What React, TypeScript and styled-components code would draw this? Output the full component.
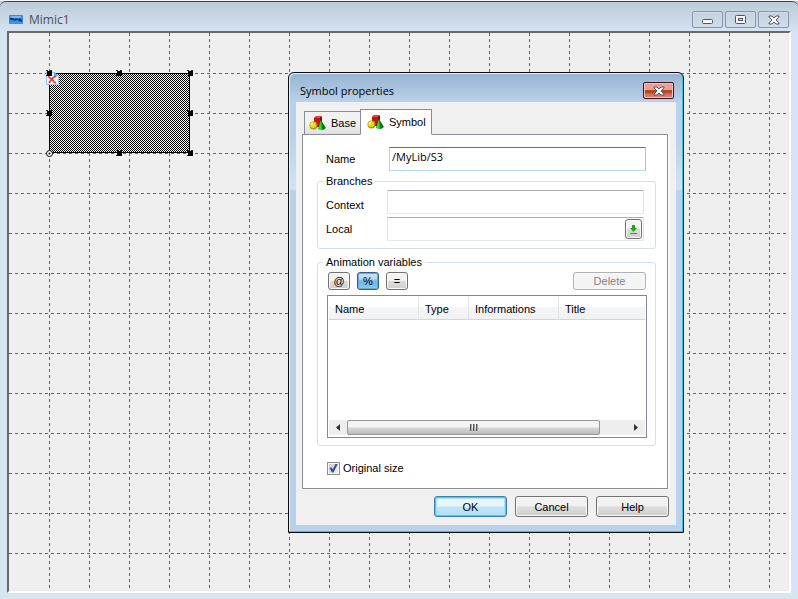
import React from "react";
import styled, { createGlobalStyle, css } from "styled-components";

const GlobalStyle = createGlobalStyle`
  *, *::before, *::after { box-sizing: border-box; }
  body { margin: 0; background: #fff; font: 11px/14px "Liberation Sans", Arial, sans-serif; color: #000; }
  button, input { font: inherit; color: inherit; margin: 0; }
`;

const uiFont = css`font-family: "Open Sans", "Segoe UI", sans-serif; line-height: 16px;`;

const MainWindow = styled.main`
  position: relative;
  display: flex;
  flex-direction: column;
  min-height: 100vh;
  padding: 0 7px 6px;
  border-top: 1px solid #f4f4f4;
  background: linear-gradient(#bccad9, #d7e4f2 32px);
  &::before {
    content: "";
    position: absolute;
    inset: 0;
    border: solid #3f4448;
    border-width: 1px 0 0;
    border-radius: 6px 6px 0 0;
    pointer-events: none;
  }
`;

const MainTitleBar = styled.header`
  display: flex;
  align-items: center;
  gap: 6px;
  height: 30px;
  padding: 7px 0 0 2px;
`;

const MainTitle = styled.h1`
  ${uiFont}
  flex: 1;
  margin: 0;
  font-size: 12px;
  font-weight: 400;
  color: #4a4f56;
`;

const WindowButtons = styled.div`
  display: flex;
  gap: 2px;
  padding-right: 2px;
`;

const WindowButton = styled.button`
  display: flex;
  align-items: center;
  justify-content: center;
  width: 31px;
  height: 17px;
  padding: 0;
  border: 1px solid #8393ae;
  border-radius: 2px;
  background: linear-gradient(#c4d2e0, #cfdcea);
  box-shadow: inset 0 0 0 1px #d3deea;
`;

const CloseButton = styled(WindowButton)`
  border-color: #43111f;
  background: linear-gradient(#e5a196 0 45%, #b8491f 50% 66%, #d0705e 72%, #dc8577);
  box-shadow: inset 0 0 0 1px #f0c4b8;
`;

const Canvas = styled.section`
  flex: 1;
  display: flex;
  border: 2px solid;
  border-color: #696969 #fff #fff #696969;
  background: #efefef;
  box-shadow: inset -1px -1px 0 #e8e8e8;
  svg { flex: 1; display: block; }
`;

const Dialog = styled.section`
  position: absolute;
  left: 288px;
  top: 71px;
  width: 396px;
  padding: 0 7px 7px;
  border: 1px solid #0a0c0e;
  border-radius: 6px 6px 0 0;
  background: linear-gradient(#98b4d2, #b9d1ea 29px, #b9d1ea 64px, #d3e2f3 116px, #b9d1ea 118px);
  box-shadow: inset -1px -1px 0 #35c5e8, inset 1px 1px 0 #e3eef9;
`;

const DialogTitleBar = styled.header`
  display: flex;
  align-items: center;
  justify-content: space-between;
  height: 29px;
  padding: 6px 2px 0 4px;
`;

const DialogTitle = styled.h2`
  ${uiFont}
  margin: 0;
  font-size: 11px;
  font-weight: 400;
`;

const DialogBody = styled.div`
  padding: 7px 7px 8px 6px;
  background: #f0f0f0;
`;

const TabList = styled.div`
  display: flex;
  align-items: flex-end;
  height: 26px;
  padding-left: 2px;
  margin-bottom: -1px;
`;

const Tab = styled.button<{ $active?: boolean }>`
  position: relative;
  display: flex;
  align-items: center;
  gap: 5px;
  width: ${(p) => (p.$active ? 72 : 57)}px;
  height: ${(p) => (p.$active ? 26 : 24)}px;
  margin-left: ${(p) => (p.$active ? -1 : 0)}px;
  padding: 0 0 0 ${(p) => (p.$active ? 6 : 4)}px;
  border: 1px solid #898c95;
  border-bottom-color: ${(p) => (p.$active ? "#fff" : "#898c95")};
  background: ${(p) => (p.$active ? "#fff" : "linear-gradient(#f2f2f2 50%, #dfdfdf)")};
`;

const Panel = styled.form`
  display: flex;
  flex-direction: column;
  margin-right: 1px;
  padding: 12px 11px 13px 14px;
  border: 1px solid #898c95;
  background: #fff;
  box-shadow: 2px 1px 0 #fafafa;
`;

const Field = styled.div<{ $wide?: boolean }>`
  display: grid;
  grid-template-columns: ${(p) => (p.$wide ? 63 : 61)}px 1fr;
  align-items: center;
  padding: ${(p) => (p.$wide ? "0 10px 0 9px" : "0 3px 0 0")};
  & + & { margin-top: 3px; }
`;

const LowLabel = styled.label`
  padding-top: 5px;
`;

const TextInput = styled.input`
  ${uiFont}
  width: 100%;
  min-width: 0;
  height: 24px;
  padding: 0 2px 5px;
  border: 1px solid;
  border-color: #3d7bad #a4c9e3 #b7d9ed #b5cfe7;
  border-radius: 1px;
  background: #fff;
  font-size: 11px;
  outline: 0;
`;

const QuietInput = styled(TextInput)`
  border-color: #abadb3 #e2e3ea #e3e9ef #e2e3ea;
`;

const ComboBox = styled.div`
  display: flex;
  align-items: center;
  height: 24px;
  padding-right: 1px;
  border: 1px solid;
  border-color: #abadb3 #e2e3ea #e3e9ef #e2e3ea;
  border-radius: 1px;
  input { flex: 1; height: 20px; border: 0; }
`;

const Group = styled.fieldset`
  min-width: 0;
  margin: 0;
  padding: 2px 8px 7px;
  border: 1px solid #d5dfe5;
  border-radius: 3px;
`;

const Branches = styled(Group)`
  margin-top: 3px;
`;

const Animation = styled(Group)`
  margin-top: 6px;
`;

const Legend = styled.legend`
  height: 14px;
  margin-left: -3px;
  padding: 0 3px;
`;

const Button = styled.button<{ $primary?: boolean; $pressed?: boolean }>`
  display: flex;
  align-items: center;
  justify-content: center;
  height: 18px;
  padding: 0;
  border: 1px solid ${(p) => (p.$primary ? "#3c7fb1" : p.$pressed ? "#2c628b" : "#707070")};
  border-radius: 3px;
  background: ${(p) =>
    p.$primary
      ? "linear-gradient(#e9f5fc 48%, #bfe4f7 52%, #b8dff4)"
      : p.$pressed
        ? "linear-gradient(#c3def1 30%, #6eb4e4 55%, #8bcdf4)"
        : "linear-gradient(#f2f2f2 46%, #dddddd 52%, #cfcfcf)"};
  box-shadow: ${(p) =>
    p.$primary
      ? "inset 0 0 0 1px #43cdf5, inset 0 0 0 2px #a5e4f9"
      : p.$pressed
        ? "inset 0 0 0 1px #70a9cf"
        : "inset 0 0 0 1px #fafafa"};
  &:disabled {
    border-color: #adb2b5;
    background: #f4f4f4;
    color: #838383;
  }
`;

const SquareButton = styled(Button)`
  width: 22px;
`;

const PickButton = styled(Button)`
  width: 17px;
  height: 20px;
`;

const WideButton = styled(Button)`
  width: 73px;
`;

const DialogButton = styled(WideButton)`
  height: 21px;
`;

const Toolbar = styled.div`
  display: flex;
  gap: 7px;
  padding: 1px 1px 0 2px;
  ${WideButton} { margin-left: auto; }
`;

const ListView = styled.div`
  display: flex;
  flex-direction: column;
  margin: 5px 0 0 1px;
  padding: 0 1px 2px;
  border: 1px solid #828790;
`;

const ListTable = styled.table`
  width: 100%;
  border-collapse: separate;
  border-spacing: 0;
  table-layout: fixed;
  th {
    height: 24px;
    padding: 2px 6px 0;
    border-bottom: 1px solid #d5d5d5;
    border-right: 1px solid #e4e5e8;
    background: linear-gradient(#fff 45%, #f5f6f7 50%, #f1f2f4);
    font-weight: 400;
    text-align: left;
  }
  th:last-child { border-right: 0; }
  td { height: 100px; padding: 0; }
`;

const ScrollBar = styled.div`
  display: grid;
  grid-template-columns: 18px 253px 1fr 18px;
  height: 15px;
  background: #eeeeee;
`;

const ScrollArrow = styled.button`
  display: flex;
  align-items: center;
  justify-content: center;
  padding: 0;
  border: 0;
  background: transparent;
`;

const ScrollThumb = styled.div`
  display: flex;
  align-items: center;
  justify-content: center;
  border: 1px solid #979797;
  border-radius: 2px;
  background: linear-gradient(#f4f4f4 45%, #d6d6d6 55%, #bdbdbd);
`;

const CheckField = styled.label`
  display: flex;
  align-items: center;
  gap: 3px;
  margin-top: 15px;
  padding-left: 10px;
`;

const CheckBox = styled.input`
  appearance: none;
  display: grid;
  place-items: center;
  width: 13px;
  height: 13px;
  border: 1px solid #8e8f8f;
  background: linear-gradient(135deg, #c4c9ce, #f4f4f4);
  box-shadow: inset 0 0 0 1px #f4f4f4;
  &:checked::before {
    content: "";
    width: 9px;
    height: 9px;
    background: #31528f;
    clip-path: polygon(5% 50%, 25% 42%, 42% 64%, 75% 0, 98% 4%, 50% 100%, 34% 100%);
  }
`;

const DialogActions = styled.footer`
  display: flex;
  justify-content: flex-end;
  gap: 8px;
  padding-top: 7px;
`;

const handles = [[40, 40], [110, 40], [181, 40], [40, 80], [181, 80], [110, 120], [181, 120]];

const Grid = () => (
  <svg width="100%" shapeRendering="crispEdges" aria-label="Drawing area">
    <defs>
      <pattern id="columns" width="40" height="6" patternUnits="userSpaceOnUse">
        <rect width="1" height="3" fill="#626062" />
      </pattern>
      <pattern id="rows" width="6" height="40" patternUnits="userSpaceOnUse">
        <rect width="3" height="1" fill="#626062" />
      </pattern>
      <pattern id="checker" width="2" height="2" patternUnits="userSpaceOnUse">
        <rect width="2" height="2" fill="#fff" />
        <path d="M0 0h1v1H0zM1 1h1v1H1z" fill="#000" />
      </pattern>
    </defs>
    <rect x="1" width="100%" height="100%" fill="url(#columns)" />
    <rect y="1" width="100%" height="100%" fill="url(#rows)" />
    <rect x="40" y="40" width="141" height="80" fill="url(#checker)" />
    <path d="M40.500 120V40.500H180.500V120M40 119.500h141" fill="none" stroke="#000" />
    <path d="M37 39h8l4 4v8H37z" fill="#e9f2fa" stroke="#a8c4da" />
    <path d="M45 38l4 5h-4z" fill="#58b4e8" />
    <path d="M40 50l2-3h2l1 2 2 1M39 43l3 3 5-3" fill="none" stroke="#e03a2c" strokeWidth="1.500" shapeRendering="auto" />
    {handles.map(([x, y]) => (
      <g key={`${x}-${y}`}>
        <path d={`M${x - 3} ${y - 3}h2v1h-2zM${x + 1} ${y - 3}h2v1h-2zM${x - 3} ${y + 2}h1v1h-1z`} fill="#222" />
        <path d={`M${x - 2} ${y - 2}h5v5h-5z`} fill="#000" />
      </g>
    ))}
    <g shapeRendering="auto">
      <circle cx="40.500" cy="120.500" r="3" fill="#fff" stroke="#000" />
      <circle cx="40.500" cy="120.500" r="1" fill="#000" />
    </g>
  </svg>
);

const MimicIcon = () => (
  <svg width="14" height="9" viewBox="0 0 14 9" aria-hidden="true">
    <rect width="14" height="9" rx="1" fill="#3b8be0" />
    <path d="M1 1h11v2H3z" fill="#78b8f0" />
    <path d="M1 3h3l1 1 2-1 2 1 2-1 2 2v2l-3-1-2-1-2 1-2-1H1z" fill="#123d83" />
    <path d="M0 7h14v2H0z" fill="#3f92e8" />
  </svg>
);

const ShapesIcon = () => (
  <svg width="17" height="16" viewBox="0 0 17 16" aria-hidden="true">
    <path d="M5 3l2-2h5l1 1v8l-2 2H5z" fill="#7d0c0c" />
    <path d="M5 3h6v7H5z" fill="#c41414" />
    <path d="M5 3l2-2h5l-1 2z" fill="#e34b3c" />
    <path d="M12 5l5 8-3 2-5-1z" fill="#0b7a12" />
    <path d="M12 5l1 10-4-1z" fill="#35d63c" />
    <circle cx="4.500" cy="10.500" r="4" fill="#a89608" />
    <circle cx="4" cy="10" r="3" fill="#e8d820" />
    <circle cx="3" cy="9" r="1" fill="#fbf59b" />
  </svg>
);

const CrossIcon = () => (
  <svg width="12" height="10" viewBox="0 0 12 10" aria-hidden="true">
    <path d="M1 1h3l2 2 2-2h3v1L8 5l3 3v1H8L6 7 4 9H1V8l3-3-3-3z" fill="#f5f5f5" stroke="#535666" />
  </svg>
);

const columns: [string, number | undefined][] = [["Name", 90], ["Type", 50], ["Informations", 90], ["Title", undefined]];

export default function App() {
  return (
    <>
      <GlobalStyle />
      <MainWindow>
        <MainTitleBar>
          <MimicIcon />
          <MainTitle>Mimic1</MainTitle>
          <WindowButtons>
            <WindowButton aria-label="Minimize">
              <svg width="12" height="10" viewBox="0 0 12 10"><rect x="0.500" y="4.500" width="10" height="4" rx="1" fill="#f5f5f5" stroke="#535666" /></svg>
            </WindowButton>
            <WindowButton aria-label="Maximize">
              <svg width="12" height="10" viewBox="0 0 12 10">
                <rect x="0.500" y="0.500" width="10" height="8" rx="1" fill="#f5f5f5" stroke="#535666" />
                <rect x="3.500" y="3.500" width="4" height="2" fill="#c8d4e0" stroke="#535666" />
              </svg>
            </WindowButton>
            <WindowButton aria-label="Close"><CrossIcon /></WindowButton>
          </WindowButtons>
        </MainTitleBar>
        <Canvas><Grid /></Canvas>

        <Dialog role="dialog" aria-labelledby="dialog-title">
          <DialogTitleBar>
            <DialogTitle id="dialog-title">Symbol properties</DialogTitle>
            <CloseButton aria-label="Close dialog"><CrossIcon /></CloseButton>
          </DialogTitleBar>
          <DialogBody>
            <TabList role="tablist">
              <Tab role="tab" aria-selected="false"><ShapesIcon />Base</Tab>
              <Tab role="tab" aria-selected="true" $active><ShapesIcon />Symbol</Tab>
            </TabList>
            <Panel>
              <Field $wide>
                <label htmlFor="name">Name</label>
                <TextInput id="name" defaultValue="/MyLib/S3" />
              </Field>
              <Branches>
                <Legend>Branches</Legend>
                <Field>
                  <LowLabel htmlFor="context">Context</LowLabel>
                  <QuietInput id="context" />
                </Field>
                <Field>
                  <label htmlFor="local">Local</label>
                  <ComboBox>
                    <QuietInput id="local" />
                    <PickButton type="button" aria-label="Pick local branch">
                      <svg width="9" height="11" viewBox="0 0 9 11"><path d="M3 1h3v3h2L4.500 8 1 4h2z" fill="#1fa80f" /><path d="M1 9h7v1H1z" fill="#1fa80f" /></svg>
                    </PickButton>
                  </ComboBox>
                </Field>
              </Branches>
              <Animation>
                <Legend>Animation variables</Legend>
                <Toolbar>
                  <SquareButton type="button">@</SquareButton>
                  <SquareButton type="button" $pressed>%</SquareButton>
                  <SquareButton type="button">=</SquareButton>
                  <WideButton type="button" disabled>Delete</WideButton>
                </Toolbar>
                <ListView>
                  <ListTable>
                    <colgroup>{columns.map(([n, w]) => <col key={n} width={w} />)}</colgroup>
                    <thead><tr>{columns.map(([n]) => <th key={n} scope="col">{n}</th>)}</tr></thead>
                    <tbody><tr><td colSpan={4} /></tr></tbody>
                  </ListTable>
                  <ScrollBar>
                    <ScrollArrow type="button" aria-label="Scroll left">
                      <svg width="4" height="7" viewBox="0 0 4 7"><path d="M4 0v7L0 3.500z" fill="#333" /></svg>
                    </ScrollArrow>
                    <ScrollThumb>
                      <svg width="8" height="7" viewBox="0 0 8 7"><path d="M0 0h1v7H0zM3 0h1v7H3zM6 0h1v7H6z" fill="#555" /><path d="M1 0h1v7H1zM4 0h1v7H4zM7 0h1v7H7z" fill="#aaa" /></svg>
                    </ScrollThumb>
                    <span />
                    <ScrollArrow type="button" aria-label="Scroll right">
                      <svg width="4" height="7" viewBox="0 0 4 7"><path d="M0 0v7l4-3.500z" fill="#333" /></svg>
                    </ScrollArrow>
                  </ScrollBar>
                </ListView>
              </Animation>
              <CheckField>
                <CheckBox type="checkbox" defaultChecked />
                Original size
              </CheckField>
            </Panel>
            <DialogActions>
              <DialogButton $primary>OK</DialogButton>
              <DialogButton>Cancel</DialogButton>
              <DialogButton>Help</DialogButton>
            </DialogActions>
          </DialogBody>
        </Dialog>
      </MainWindow>
    </>
  );
}
